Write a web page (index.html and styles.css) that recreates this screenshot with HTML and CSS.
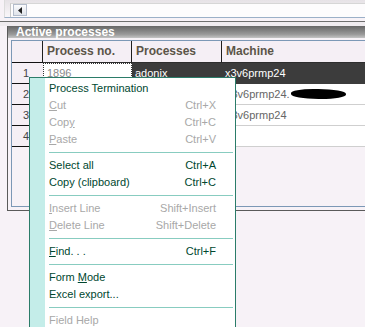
FILE: index.html
```html
<!DOCTYPE html>
<html lang="en">
<head>
    <meta charset="UTF-8">
    <title>Active processes</title>
    <link rel="stylesheet" href="styles.css">
</head>
<body>
    <div class="topbar">
        <div class="field">
            <span class="scroll-btn">
                <svg width="6" height="7" viewBox="0 0 6 7"><path d="M1 3.5 L5 0 L5 7 Z" fill="#222"/></svg>
            </span>
        </div>
    </div>
    <div class="rule"></div>

    <div class="group">
        <div class="group-title">Active processes</div>
        <div class="group-body">
            <div class="grid">
                <div class="row head">
                    <div class="cell num"></div>
                    <div class="cell">Process no.</div>
                    <div class="cell">Processes</div>
                    <div class="cell last">Machine</div>
                </div>
                <div class="row">
                    <div class="cell num">1</div>
                    <div class="cell focus">1896</div>
                    <div class="cell dark">adonix</div>
                    <div class="cell dark">x3v6prmp24</div>
                </div>
                <div class="row">
                    <div class="cell num">2</div>
                    <div class="cell"></div>
                    <div class="cell"></div>
                    <div class="cell">x3v6prmp24.<span class="blot"></span></div>
                </div>
                <div class="row">
                    <div class="cell num">3</div>
                    <div class="cell"></div>
                    <div class="cell"></div>
                    <div class="cell">x3v6prmp24</div>
                </div>
                <div class="row">
                    <div class="cell num">4</div>
                    <div class="cell"></div>
                    <div class="cell"></div>
                    <div class="cell"></div>
                </div>
            </div>
        </div>
    </div>

    <!-- context menu over the grid -->
    <div class="menu">
        <div class="item"><span>Process Termination</span></div>
        <div class="item off"><span><u>C</u>ut</span><span>Ctrl+X</span></div>
        <div class="item off"><span>Cop<u>y</u></span><span>Ctrl+C</span></div>
        <div class="item off"><span><u>P</u>aste</span><span>Ctrl+V</span></div>
        <div class="sep"></div>
        <div class="item"><span>Select all</span><span>Ctrl+A</span></div>
        <div class="item"><span>Copy (clipboard)</span><span>Ctrl+C</span></div>
        <div class="sep"></div>
        <div class="item off"><span><u>I</u>nsert Line</span><span>Shift+Insert</span></div>
        <div class="item off"><span><u>D</u>elete Line</span><span>Shift+Delete</span></div>
        <div class="sep"></div>
        <div class="item"><span><u>F</u>ind. . .</span><span>Ctrl+F</span></div>
        <div class="sep"></div>
        <div class="item"><span>Form <u>M</u>ode</span></div>
        <div class="item"><span>Excel export...</span></div>
        <div class="sep"></div>
        <div class="item off"><span>Field Help</span></div>
    </div>
</body>
</html>
```

FILE: styles.css
```css
body {
    margin: 0;
    width: 365px;
    height: 327px;
    overflow: hidden;
    position: relative;
    background: #f7f2f7;
    font-family: "Liberation Sans", Arial, sans-serif;
    font-size: 11px;
}
.topbar {
    height: 18px;
    box-sizing: border-box;
    padding: 3px 0 0 5px;
    margin-left: 4px;
    background: linear-gradient(#e6e2e6, #f9f6f9);
    border-left: 1px solid #dcdcdc;
    border-bottom: 1px solid #9bb0c8;
}
.field {
    height: 14px;
    box-sizing: border-box;
    background: #fdfcfd;
    border-left: 1px solid #c8c8c8;
    border-top: 1px solid #d6d6d6;
    padding: 0 0 0 2px;
}
.scroll-btn {
    display: flex;
    align-items: center;
    justify-content: center;
    width: 14px;
    height: 12px;
    box-sizing: border-box;
    border: 1px solid #b4bccb;
    background: linear-gradient(#fbfbfd, #dfe3ea);
}
.rule {
    margin-top: 3px;
    border-top: 1px solid #6e6e6e;
    height: 4px;
    background: #efebef;
}
.group {
    margin-left: 7px;
    border-left: 1px solid #5a5a5a;
    border-bottom: 1px solid #5a5a5a;
}
.group-title {
    height: 12px;
    line-height: 12px;
    padding-left: 8px;
    color: #fff;
    font-size: 12px;
    font-weight: bold;
    background: linear-gradient(#666666, #9a9a9a 70%, #c4c4c4);
}
.group-body {
    padding: 2px 0 3px 3px;
}
.grid {
    height: 167px;
    box-sizing: border-box;
    border: 1px solid #7c98b6;
    border-right: none;
    background: #f7f2f7;
}
.row {
    display: grid;
    grid-template-columns: 31px 89px 90px 1fr;
    height: 21px;
}
.cell {
    box-sizing: border-box;
    padding-left: 4px;
    line-height: 20px;
    white-space: nowrap;
    overflow: hidden;
    color: #666;
    background: #fff;
    border-bottom: 1px solid #cfcfcf;
}
.row.head {
    height: 22px;
}
.row.head .cell {
    background: #f5eff5;
    color: #5b5548;
    font-size: 12px;
    font-weight: bold;
    line-height: 21px;
    border-bottom: 1px solid #2e2e2e;
    border-right: 1px solid #1e1e1e;
}
.row.head .cell.last {
    border-right: none;
}
.cell.num,
.row.head .cell.num {
    background: #f5eff5;
    text-align: right;
    padding: 0 14px 0 0;
    color: #444;
    border-bottom: 1px solid #111;
}
.cell.focus {
    color: #8a8a8a;
    border: 1px dotted #333;
    line-height: 19px;
    padding-left: 3px;
}
.cell.dark {
    background: #3c3c3c;
    color: #fff;
    border-bottom-color: #3c3c3c;
    padding-left: 3px;
}
.blot {
    display: inline-block;
    width: 55px;
    height: 10px;
    margin-left: 1px;
    vertical-align: -1px;
    background: #000;
    border-radius: 40% 50% 45% 50%;
}
.menu {
    position: absolute;
    left: 29px;
    top: 77px;
    width: 207px;
    height: 250px;
    box-sizing: border-box;
    padding-top: 2px;
    overflow: hidden;
    border: 1px solid #2b7c69;
    border-bottom: none;
    background: linear-gradient(to right, #c4ede9 15px, #fff 15px);
}
.item {
    display: flex;
    justify-content: space-between;
    height: 17px;
    line-height: 17px;
    padding: 0 19px;
    color: #00472f;
}
.item.off {
    color: #a8a8a8;
}
.sep {
    height: 1px;
    margin: 4px 2px 4px 19px;
    background: #88ccc0;
}
```
